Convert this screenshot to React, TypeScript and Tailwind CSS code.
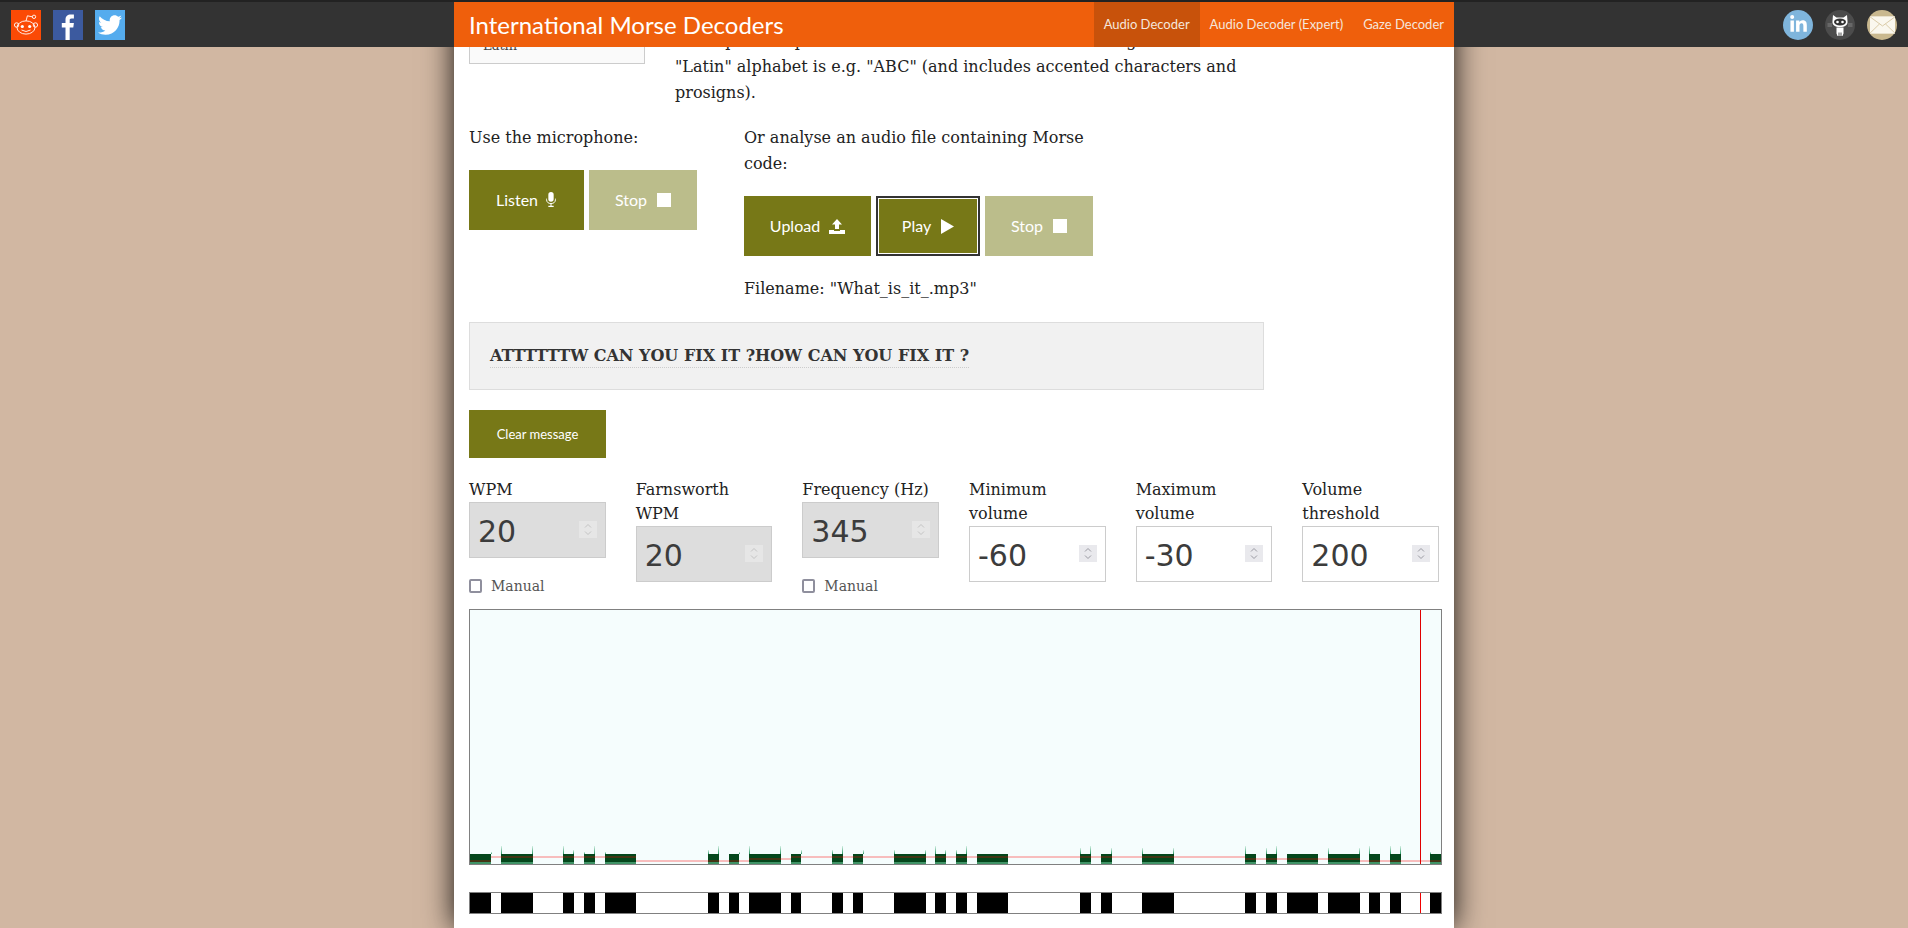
import { FaTwitter, FaLinkedinIn } from "react-icons/fa";

const bars: [number, number][] = [
  [470, 491], [501, 533], [563, 574], [584, 595], [605, 636], [708, 719], [729, 739], [749, 781],
  [791, 801], [832, 843], [853, 863], [894, 926], [935, 946], [956, 967], [977, 1008], [1080, 1091],
  [1101, 1112], [1142, 1174], [1245, 1256], [1266, 1277], [1287, 1318], [1328, 1360], [1369, 1380],
  [1390, 1401], [1430, 1441],
];

// x, top of spike (page coordinates)
const spikes: [number, number][] = [
  [491, 852], [501, 846], [532, 846], [563, 846], [573, 850], [584, 852], [594, 846], [605, 852],
  [708, 850], [718, 846], [739, 852], [749, 846], [780, 846], [801, 850], [832, 850], [842, 846],
  [863, 850], [894, 850], [925, 850], [935, 846], [945, 850], [956, 850], [966, 846], [1080, 848],
  [1090, 846], [1111, 848], [1142, 848], [1173, 848], [1245, 846], [1266, 848], [1276, 846],
  [1328, 848], [1359, 848], [1369, 846], [1390, 846], [1400, 846], [1430, 852],
];

function Waterfall() {
  return (
    <svg viewBox="470 610 971 254" className="block w-full h-full">
      <defs>
        <linearGradient id="spike" x1="0" y1="0" x2="0" y2="1">
          <stop offset="0" stopColor="#d5f0e4" />
          <stop offset="1" stopColor="#2f9a68" />
        </linearGradient>
      </defs>
      {spikes.map(([x, y]) => (
        <rect key={x} x={x} y={y} width="1" height={854 - y} fill="url(#spike)" />
      ))}
      {bars.map(([a, b]) => (
        <g key={a}>
          <rect x={a} y="854" width={b - a} height="8" fill="#04471c" />
          <rect x={a} y="862" width={b - a} height="2" fill="#3f9366" />
        </g>
      ))}
      <path
        d="M470 861H491M491 857H636M636 861H749M749 859H791M791 857H1245M1245 859H1360M1360 861H1441"
        stroke="#ff0000"
        strokeOpacity="0.25"
        strokeWidth="2"
        fill="none"
      />
      <rect x="1420" y="610" width="1" height="254" fill="#e00000" />
    </svg>
  );
}

function Timeline() {
  return (
    <svg viewBox="470 893 971 20" preserveAspectRatio="none" className="block w-full h-full">
      {bars.map(([a, b]) => (
        <rect key={a} x={a} y="893" width={b - a} height="20" fill="#000" />
      ))}
      <rect x="1420" y="893" width="1" height="20" fill="#f00000" />
    </svg>
  );
}

function RedditIcon() {
  return (
    <svg viewBox="0 0 30 30" className="w-[30px] h-[30px] block bg-[#fb4a05]">
      <g fill="none" stroke="#fff" strokeWidth="0.9">
        <ellipse cx="15" cy="17.5" rx="9" ry="6.6" />
        <circle cx="5.6" cy="15" r="2.2" />
        <circle cx="24.4" cy="15" r="2.2" />
        <circle cx="23" cy="6.8" r="1.7" />
        <path d="M15 11 L16.4 5.8 L21.3 6.8" />
        <path d="M10.5 20 Q15 23 19.5 20" />
      </g>
      <circle cx="11.3" cy="16.5" r="1.6" fill="#fff" />
      <circle cx="18.7" cy="16.5" r="1.6" fill="#fff" />
    </svg>
  );
}

function FacebookIcon() {
  return (
    <svg viewBox="0 0 30 30" className="w-[30px] h-[30px] block bg-[#3c5a9f]">
      <path
        fill="#fff"
        d="M12.5 30V17.5H8.8V13H12.5V9.6C12.5 5.9 14.7 4.4 17.6 4.4C19 4.4 20.4 4.5 20.9 4.6V8.6H18.6C16.8 8.6 16.7 9.5 16.7 10.6V13H20.9L20.3 17.5H16.7V30Z"
      />
    </svg>
  );
}

function GithubIcon() {
  return (
    <svg viewBox="0 0 30 30" className="w-[30px] h-[30px] block">
      <circle cx="15" cy="15" r="15" fill="#4c4c4c" />
      <path fill="#fff" d="M8 5L11.5 7.5H18.5L22 5L22.5 11C23 15 20 17 15 17C10 17 7 15 7.5 11Z" />
      <ellipse cx="15" cy="12" rx="6" ry="3.4" fill="#333" />
      <circle cx="12.5" cy="12" r="1.3" fill="#fff" />
      <circle cx="17.5" cy="12" r="1.3" fill="#fff" />
      <path fill="#fff" d="M11.5 17.5H18.5V23.5L17.5 26H16.5V22.5H15.5V26H14.5V22.5H13.5V26H12.5L11.5 23.5Z" />
      <path stroke="#aaa" strokeWidth="0.6" d="M2.5 14H7M2.5 16H7M23 14H27.5M23 16H27.5" />
    </svg>
  );
}

function MailIcon() {
  return (
    <div className="w-[30px] h-[30px] rounded-full bg-[#c9b88f] flex items-center justify-center">
      <svg viewBox="0 0 26 18" className="w-[25px] h-[18px] block">
        <rect width="26" height="18" fill="#faf7ee" />
        <path d="M0 0.5L13 10L26 0.5M0 17.5L10 7.8M26 17.5L16 7.8" stroke="#d8c9a4" strokeWidth="1" fill="none" />
      </svg>
    </div>
  );
}

function MicIcon() {
  return (
    <svg viewBox="0 0 12 18" className="w-[12px] h-[16px] fill-white">
      <rect x="3" y="0" width="6" height="11" rx="3" />
      <path d="M1 7.5V8.5C1 11.5 3 13 6 13C9 13 11 11.5 11 8.5V7.5" fill="none" stroke="#fff" strokeWidth="1.1" />
      <rect x="5.4" y="13" width="1.2" height="3" />
      <rect x="3" y="15.5" width="6" height="1.4" />
    </svg>
  );
}

function UploadIcon() {
  return (
    <svg viewBox="0 0 16 15" className="w-[16px] h-[15px] fill-white">
      <path d="M8 0L13 5.5H10V10H6V5.5H3Z" />
      <path d="M0 11H5V12H11V11H16V15H0Z" />
    </svg>
  );
}

function PlayIcon() {
  return (
    <svg viewBox="0 0 13 15" className="w-[13px] h-[15px] fill-white">
      <path d="M0 0L13 7.5L0 15Z" />
    </svg>
  );
}

function StopIcon() {
  return <span className="w-[14px] h-[14px] bg-white block" />;
}

function Spinner({ disabled }: { disabled?: boolean }) {
  return (
    <span
      className={`absolute right-[9px] top-[19px] w-[18px] h-[17px] flex items-center justify-center ${
        disabled ? "bg-[#e6e6e6]" : "bg-[#e9e9ed]"
      }`}
    >
      <svg viewBox="0 0 10 13" className="w-[10px] h-[13px]">
        <path
          d="M2 4.5L5 1.5L8 4.5M2 8.5L5 11.5L8 8.5"
          fill="none"
          stroke={disabled ? "#c4c4c4" : "#9a9aa2"}
          strokeWidth="1"
        />
      </svg>
    </span>
  );
}

const uiFont = "font-['Lato','Noto_Sans',sans-serif]";

function NumberField({ label, value, disabled, manual }: { label: string; value: number; disabled?: boolean; manual?: boolean }) {
  return (
    <div className="flex flex-col">
      <label className="leading-[24px] text-[16px] text-[#222]">{label}</label>
      <div className="relative">
        <input
          type="number"
          defaultValue={value}
          disabled={disabled}
          className={`block w-full h-[56px] pl-[8px] pr-[8px] pt-[2px] border border-[#ccc] text-[30px] text-[#3c3c3c] [-webkit-text-fill-color:#3c3c3c] font-['DejaVu_Sans',sans-serif] outline-none [appearance:textfield] [&::-webkit-inner-spin-button]:appearance-none ${
            disabled ? "bg-[#dddddd]" : "bg-white"
          }`}
        />
        <Spinner disabled={disabled} />
      </div>
      {manual && (
        <label className="flex items-center gap-[9px] mt-[18px] text-[14px] leading-[20px] text-[#555]">
          <input type="checkbox" className="appearance-none w-[13px] h-[14px] m-0 border-2 border-[#8f8f9d] rounded-[2px] bg-white" />
          Manual
        </label>
      )}
    </div>
  );
}

export default function App() {
  return (
    <div className="relative h-[928px] overflow-hidden bg-[#d1b7a2] font-['DejaVu_Serif',serif]">
      <header className="absolute top-0 left-0 right-0 z-10 h-[47px] bg-[#333] border-t-2 border-[#222] flex items-center justify-between pl-[11px] pr-[11px]">
        <div className="flex gap-[12px] items-center">
          <RedditIcon />
          <FacebookIcon />
          <div className="w-[30px] h-[30px] bg-[#55acee] flex items-center justify-center text-white">
            <FaTwitter size={24} />
          </div>
        </div>
        <div className="flex gap-[12px] items-center">
          <div className="w-[30px] h-[30px] rounded-full bg-[#7fb5dc] flex items-center justify-center text-white">
            <FaLinkedinIn size={19} />
          </div>
          <GithubIcon />
          <MailIcon />
        </div>
      </header>

      <nav className={`absolute top-[2px] left-[454px] z-20 w-[1000px] h-[45px] bg-[#ef5f0c] flex items-center justify-between pl-[15px] text-white ${uiFont}`}>
        <span className="text-[24px]">International Morse Decoders</span>
        <div className="flex h-full text-[13px] text-[#f5e6dc]">
          <a className="h-full flex items-center px-[10px] bg-[#c8520b]">Audio Decoder</a>
          <a className="h-full flex items-center px-[10px]">Audio Decoder (Expert)</a>
          <a className="h-full flex items-center px-[10px]">Gaze Decoder</a>
        </div>
      </nav>

      <main className="w-[1000px] h-full ml-[454px] bg-white shadow-[0_0_28px_rgba(0,0,0,0.9)] pl-[15px] pt-[24px] text-[16px] text-[#222]">
        <div className="flex">
          <div className="w-[176px] h-[40px] border border-[#ccc] bg-[#fafafa] text-[13px] pl-[13px] pt-[11px] leading-[20px] text-[#444] shrink-0">
            Latin
          </div>
          <p className="ml-[30px] mt-[4px] w-[600px] leading-[26px]">
            The alphabet specifies the characters to be decoded. E.g. the
            <br />
            "Latin" alphabet is e.g. "ABC" (and includes accented characters and
            <br />
            prosigns).
          </p>
        </div>

        <div className="flex mt-[19px]">
          <div className="w-[275px]">
            <p className="leading-[26px] mb-[19px]">Use the microphone:</p>
            <div className={`flex gap-[5px] text-white text-[16px] ${uiFont}`}>
              <button className="w-[115px] h-[60px] bg-[#777817] flex items-center justify-center gap-[7px]">
                Listen <MicIcon />
              </button>
              <button className="w-[108px] h-[60px] bg-[#bbbd8b] flex items-center justify-center gap-[10px]">
                Stop <StopIcon />
              </button>
            </div>
          </div>
          <div className="w-[360px]">
            <p className="leading-[26px] mb-[19px]">Or analyse an audio file containing Morse code:</p>
            <div className={`flex gap-[5px] text-white text-[16px] ${uiFont}`}>
              <button className="w-[127px] h-[60px] bg-[#777817] flex items-center justify-center gap-[9px]">
                Upload <UploadIcon />
              </button>
              <button className="w-[104px] h-[60px] bg-[#777817] border-2 border-[#333] shadow-[inset_0_0_0_1px_#fff] flex items-center justify-center gap-[10px]">
                Play <PlayIcon />
              </button>
              <button className="w-[108px] h-[60px] bg-[#bbbd8b] flex items-center justify-center gap-[10px]">
                Stop <StopIcon />
              </button>
            </div>
            <p className="leading-[26px] mt-[20px]">Filename: "What_is_it_.mp3"</p>
          </div>
        </div>

        <div className="w-[795px] h-[68px] mt-[20px] bg-[#f1f1f1] border border-[#ddd] flex items-center pl-[20px] pt-[2px]">
          <span className="font-bold text-[16px] leading-[20px] text-[#333] border-b border-dotted border-[#ccc] pb-[1px]">
            ATTTTTTW CAN YOU FIX IT ?HOW CAN YOU FIX IT ?
          </span>
        </div>

        <button className={`block w-[137px] h-[48px] mt-[20px] pt-[2px] bg-[#777817] text-white text-[13px] ${uiFont}`}>
          Clear message
        </button>

        <div className="grid grid-cols-6 gap-x-[30px] w-[970px] mt-[20px] h-[120px]">
          <NumberField label="WPM" value={20} disabled manual />
          <NumberField label="Farnsworth WPM" value={20} disabled />
          <NumberField label="Frequency (Hz)" value={345} disabled manual />
          <NumberField label="Minimum volume" value={-60} />
          <NumberField label="Maximum volume" value={-30} />
          <NumberField label="Volume threshold" value={200} />
        </div>

        <div className="w-[973px] h-[256px] mt-[11px] border border-[#808080] bg-[#f5fdfd]">
          <Waterfall />
        </div>
        <div className="w-[973px] h-[22px] mt-[27px] border border-[#808080] bg-white">
          <Timeline />
        </div>
      </main>
    </div>
  );
}
